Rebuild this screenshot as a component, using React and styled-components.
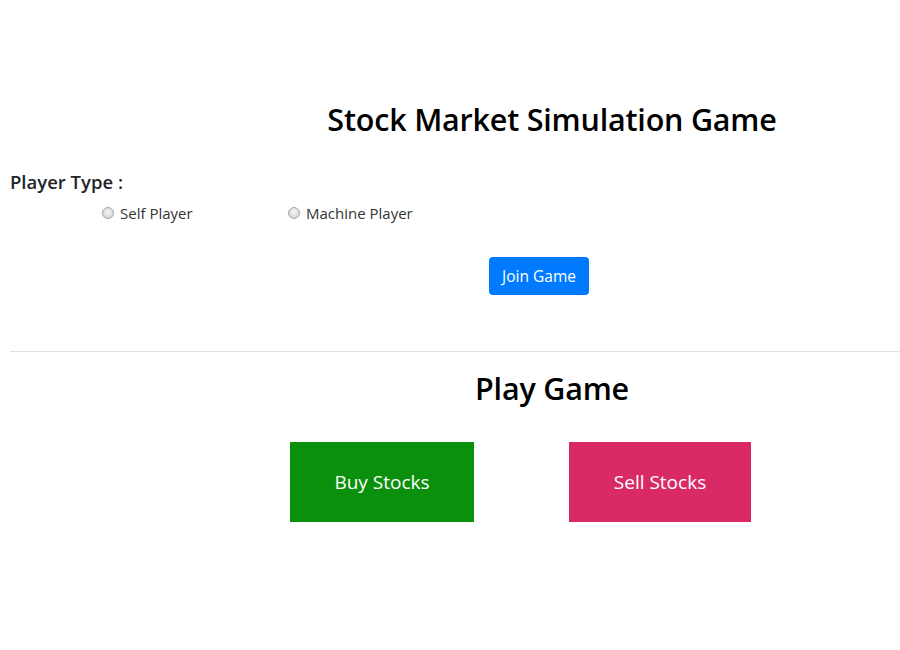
import React from "react";
import styled, { createGlobalStyle } from "styled-components";

const GlobalStyle = createGlobalStyle`
  html, body { margin: 0; padding: 0; background: #ffffff; }
  body { font-family: "Open Sans", "Noto Sans", sans-serif; color: #212529; }
`;

const Page = styled.div`
  width: 890px;
  padding: 0 0 0 10px;
  display: flex;
  flex-direction: column;
`;

const HeadingBlock = styled.div`
  padding-left: ${(p) => p.$offset}px;
  margin-top: ${(p) => p.$top}px;
  text-align: center;
`;

const Title = styled.h2`
  margin: 0;
  font-size: 30.5px;
  line-height: 40px;
  font-weight: 600;
  color: #000;
  letter-spacing: -0.2px;
`;

const FieldLabel = styled.div`
  margin-top: 31px;
  font-size: 18.5px;
  line-height: 24px;
  font-weight: 600;
  color: #212529;
`;

const RadioRow = styled.div`
  display: flex;
  padding-left: 92px;
  margin-top: 7px;
`;

const RadioOption = styled.label`
  display: flex;
  align-items: center;
  width: ${(p) => p.$width || "auto"};
  font-size: 15px;
  line-height: 24px;
  color: #333;
`;

const Radio = styled.input.attrs({ type: "radio" })`
  appearance: none;
  -webkit-appearance: none;
  box-sizing: border-box;
  width: 12px;
  height: 12px;
  margin: 0 6px 0 0;
  border-radius: 50%;
  border: 1px solid #a7a7a7;
  background: radial-gradient(circle at 50% 40%, #f4f4f4 0%, #dcdcdc 60%, #cfcfcf 100%);
`;

const JoinRow = styled.div`
  display: flex;
  justify-content: center;
  padding-left: 168px;
  margin-top: 32px;
`;

const JoinButton = styled.button`
  width: 100px;
  height: 38px;
  border: none;
  border-radius: 4px;
  background: #007bff;
  color: #fff;
  font-family: inherit;
  font-size: 15.5px;
  padding: 0;
`;

const Divider = styled.hr`
  margin: 56px 0 0;
  border: none;
  border-top: 1px solid #e2e2e2;
  width: 890px;
`;

const ActionRow = styled.div`
  display: flex;
  gap: 95px;
  padding-left: 280px;
  margin-top: 34px;
`;

const ActionButton = styled.button`
  width: ${(p) => p.$width}px;
  height: 80px;
  border: none;
  border-radius: 0;
  background: ${(p) => p.$bg};
  color: #fff;
  font-family: inherit;
  font-size: 19px;
  padding: 0;
`;

export default function App() {
  return (
    <>
      <GlobalStyle />
      <Page>
        <HeadingBlock $offset={194} $top={99}>
          <Title>Stock Market Simulation Game</Title>
        </HeadingBlock>
        <FieldLabel>Player Type :</FieldLabel>
        <RadioRow>
          <RadioOption $width="186px">
            <Radio name="ptype" />
            Self Player
          </RadioOption>
          <RadioOption>
            <Radio name="ptype" />
            Machine Player
          </RadioOption>
        </RadioRow>
        <JoinRow>
          <JoinButton>Join Game</JoinButton>
        </JoinRow>
        <Divider />
        <HeadingBlock $offset={194} $top={16}>
          <Title>Play Game</Title>
        </HeadingBlock>
        <ActionRow>
          <ActionButton $bg="#0a900d" $width={184}>Buy Stocks</ActionButton>
          <ActionButton $bg="#d92a66" $width={182}>Sell Stocks</ActionButton>
        </ActionRow>
      </Page>
    </>
  );
}
